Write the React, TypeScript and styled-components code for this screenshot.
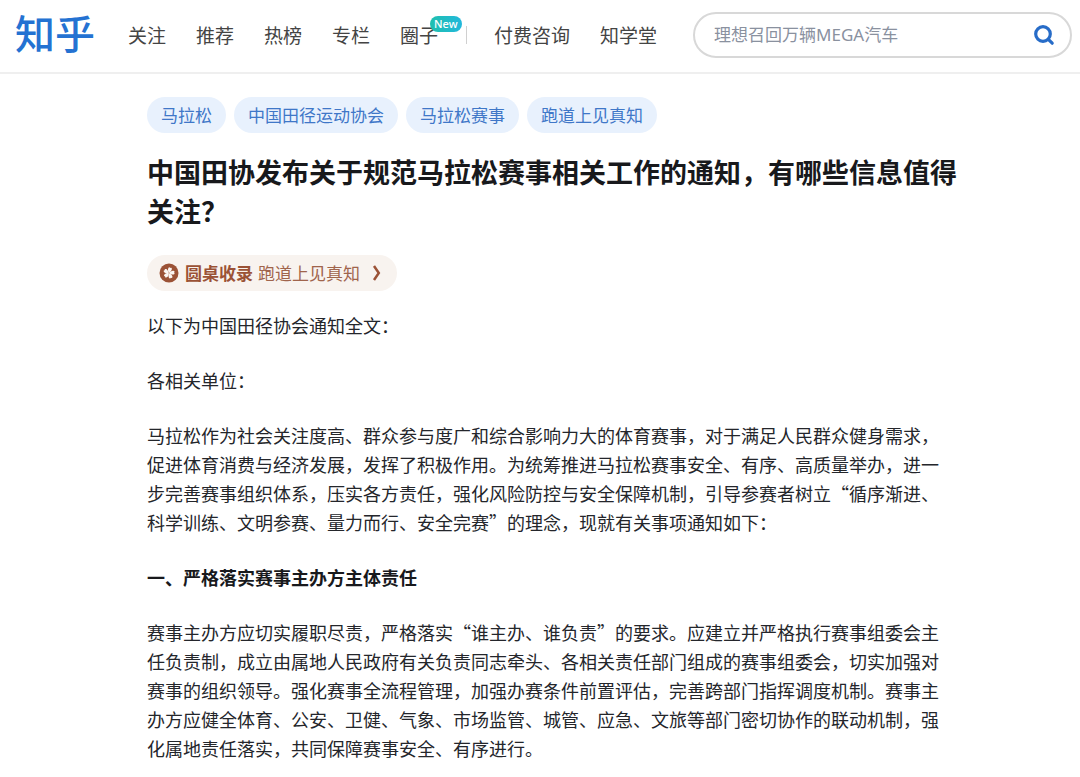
import React from 'react';
import styled, { createGlobalStyle } from 'styled-components';

const GlobalStyle = createGlobalStyle`
  *, *::before, *::after { box-sizing: border-box; }
  body {
    margin: 0;
    background: #fff;
    color: #24262b;
    font-family: "Noto Sans CJK SC", "Noto Sans", sans-serif;
  }
  a { color: inherit; text-decoration: none; }
`;

const Header = styled.header`
  display: flex;
  align-items: center;
  height: 74px;
  padding: 0 8px 2px 15px;
  border-bottom: 2px solid #efefef;
`;

const Logo = styled.a`
  flex: none;
  margin-right: 33px;
  padding-bottom: 6px;
  font-size: 40px;
  line-height: 48px;
  font-weight: 500;
  && { color: #2472d2; }
`;

const Nav = styled.nav`
  display: flex;
  flex: none;
  align-items: center;
  gap: 30px;
`;

const NavLink = styled.a`
  position: relative;
  font-size: 19px;
  line-height: 30px;
  white-space: nowrap;
  && { color: #444; }
`;

const NewBadge = styled.span`
  position: absolute;
  top: -4px;
  left: 30px;
  padding: 0 4px;
  border-radius: 8px;
  background: linear-gradient(90deg, #1fbfae, #22b8dc);
  color: #fff;
  font-family: "Noto Sans", sans-serif;
  font-size: 11px;
  line-height: 16px;
  font-weight: 500;
`;

const Divider = styled.span`
  width: 1px;
  height: 18px;
  margin: 0 -3px 0 -2px;
  background: #d0d0d0;
`;

const SearchForm = styled.form`
  display: flex;
  flex: 1;
  align-items: center;
  min-width: 200px;
  height: 46px;
  margin-left: 36px;
  padding: 0 15px 0 19px;
  border: 2px solid #d8d8d8;
  border-radius: 23px;
`;

const SearchInput = styled.input`
  flex: 1;
  min-width: 0;
  padding: 0;
  border: 0;
  outline: 0;
  background: transparent;
  color: #24262b;
  font-family: "Noto Sans", "Noto Sans CJK SC", sans-serif;
  font-size: 17px;
  line-height: 26px;
  &::placeholder { color: #8a919f; opacity: 1; }
`;

const SearchButton = styled.button`
  display: flex;
  padding: 0;
  border: 0;
  background: none;
  color: #276cc8;
  cursor: pointer;
`;

const Main = styled.main`
  padding: 23px 120px 13px 147px;
`;

const Tags = styled.div`
  display: flex;
  flex-wrap: wrap;
  gap: 8px;
`;

const Tag = styled.a`
  padding: 0 14px;
  border-radius: 18px;
  background: #e8f1fd;
  font-size: 17px;
  line-height: 36px;
  && { color: #3f77c8; }
`;

const Title = styled.h1`
  margin: 19px 0 25px;
  color: #18191c;
  font-size: 27px;
  line-height: 39px;
  font-weight: 700;
`;

const Roundtable = styled.a`
  display: inline-flex;
  align-items: center;
  height: 36px;
  padding: 0 14px 0 12px;
  border-radius: 18px;
  background: #f8f3ef;
  font-size: 17px;
  line-height: 36px;
  && { color: #a0644c; }
  strong { margin: 0 5px 0 6px; color: #9b5236; }
  svg:last-child { margin-left: 11px; }
`;

const Article = styled.article`
  margin-top: 20px;
  padding-right: 10px;
  font-size: 18px;
  line-height: 29px;
  p, h2 { margin: 0 0 26px; font-size: inherit; }
  p:last-child { margin-bottom: 0; }
  h2 { color: #18191c; font-weight: 700; }
`;

const SearchIcon = () => (
  <svg width="22" height="22" viewBox="0 0 22 22" fill="none" stroke="currentColor" strokeWidth="3.2" strokeLinecap="round" aria-hidden="true">
    <circle cx="10" cy="10" r="7.3" />
    <path d="M15.8 15.8 19.2 19.2" />
  </svg>
);

const FlowerIcon = () => (
  <svg width="20" height="20" viewBox="0 0 20 20" aria-hidden="true">
    <circle cx="10" cy="10" r="9.5" fill="#9b5236" />
    {[0, 72, 144, 216, 288].map((angle) => (
      <path
        key={angle}
        transform={`rotate(${angle + 12} 10 10)`}
        d="M10 9.8C8.8 8.6 7.9 7 8.3 5.4 8.6 4.2 9.6 4 10.1 4.9 10.9 4.1 12 4.6 12 5.7 12 7.2 11.1 8.8 10 9.8Z"
        fill="#fbf6f2"
      />
    ))}
  </svg>
);

const ChevronIcon = () => (
  <svg width="12" height="18" viewBox="0 0 12 18" fill="none" stroke="#9b5236" strokeWidth="2.5" aria-hidden="true">
    <path d="M3 2 7.8 9 3 16" />
  </svg>
);

const topics = ['马拉松', '中国田径运动协会', '马拉松赛事', '跑道上见真知'];

export default function App() {
  return (
    <>
      <GlobalStyle />
      <Header>
        <Logo href="#" lang="zh-CN">知乎</Logo>
        <Nav lang="zh-CN">
          <NavLink href="#">关注</NavLink>
          <NavLink href="#">推荐</NavLink>
          <NavLink href="#">热榜</NavLink>
          <NavLink href="#">专栏</NavLink>
          <NavLink href="#">圈子<NewBadge>New</NewBadge></NavLink>
          <Divider />
          <NavLink href="#">付费咨询</NavLink>
          <NavLink href="#">知学堂</NavLink>
        </Nav>
        <SearchForm role="search" onSubmit={(e) => e.preventDefault()}>
          <SearchInput type="text" aria-label="搜索" placeholder="理想召回万辆MEGA汽车" />
          <SearchButton type="submit" aria-label="搜索"><SearchIcon /></SearchButton>
        </SearchForm>
      </Header>
      <Main lang="zh-CN">
        <Tags>
          {topics.map((topic) => <Tag key={topic} href="#">{topic}</Tag>)}
        </Tags>
        <Title>中国田协发布关于规范马拉松赛事相关工作的通知，有哪些信息值得关注？</Title>
        <Roundtable href="#">
          <FlowerIcon />
          <strong>圆桌收录</strong>
          <span>跑道上见真知</span>
          <ChevronIcon />
        </Roundtable>
        <Article>
          <p>以下为中国田径协会通知全文：</p>
          <p>各相关单位：</p>
          <p>马拉松作为社会关注度高、群众参与度广和综合影响力大的体育赛事，对于满足人民群众健身需求，促进体育消费与经济发展，发挥了积极作用。为统筹推进马拉松赛事安全、有序、高质量举办，进一步完善赛事组织体系，压实各方责任，强化风险防控与安全保障机制，引导参赛者树立“循序渐进、科学训练、文明参赛、量力而行、安全完赛”的理念，现就有关事项通知如下：</p>
          <h2>一、严格落实赛事主办方主体责任</h2>
          <p>赛事主办方应切实履职尽责，严格落实“谁主办、谁负责”的要求。应建立并严格执行赛事组委会主任负责制，成立由属地人民政府有关负责同志牵头、各相关责任部门组成的赛事组委会，切实加强对赛事的组织领导。强化赛事全流程管理，加强办赛条件前置评估，完善跨部门指挥调度机制。赛事主办方应健全体育、公安、卫健、气象、市场监管、城管、应急、文旅等部门密切协作的联动机制，强化属地责任落实，共同保障赛事安全、有序进行。</p>
        </Article>
      </Main>
    </>
  );
}
